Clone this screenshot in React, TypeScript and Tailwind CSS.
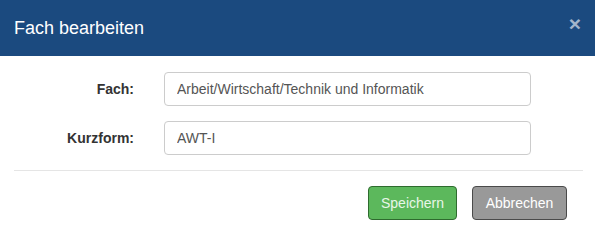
export default function App() {
  return (
    <div className="w-[595px] h-[248px] bg-white font-['Liberation_Sans',Arial,sans-serif] text-[14px] text-[#333]">
      <div className="h-[56px] bg-[#1b4a7f] flex items-center justify-between pl-[14px] pr-[14px]">
        <h4 className="text-[18px] text-white leading-none">Fach bearbeiten</h4>
        <button className="text-[21px] font-bold leading-none text-white/60 -mt-[10px]">×</button>
      </div>

      <div className="pt-[16px] px-[14px]">
        <div className="flex items-center h-[34px]">
          <label className="w-[120px] text-right font-bold">Fach:</label>
          <input
            className="ml-[30px] w-[367px] h-[34px] rounded-[4px] border border-[#ccc] px-[12px] text-[#555] outline-none"
            defaultValue="Arbeit/Wirtschaft/Technik und Informatik"
          />
        </div>
        <div className="flex items-center h-[34px] mt-[15px]">
          <label className="w-[120px] text-right font-bold">Kurzform:</label>
          <input
            className="ml-[30px] w-[367px] h-[34px] rounded-[4px] border border-[#ccc] px-[12px] text-[#555] outline-none"
            defaultValue="AWT-I"
          />
        </div>
        <div className="mt-[15px] border-t border-[#e5e5e5] w-[569px]" />
        <div className="flex justify-end gap-[15px] pt-[15px] w-[553px]">
          <button className="h-[34px] w-[89px] rounded-[4px] border border-[#2e6b2e] bg-[#5cb85c] text-[#e8f6e8]">
            Speichern
          </button>
          <button className="h-[34px] w-[95px] rounded-[4px] border border-[#4a4a4a] bg-[#999] text-white">
            Abbrechen
          </button>
        </div>
      </div>
    </div>
  );
}
